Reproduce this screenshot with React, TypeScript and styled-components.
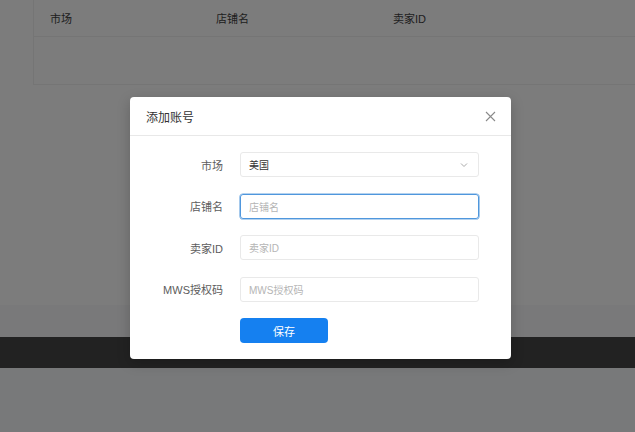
import React from "react";
import styled, { createGlobalStyle } from "styled-components";

const Global = createGlobalStyle`
  html, body { margin: 0; padding: 0; overflow: hidden; }
  body { font-family: "Liberation Sans", "Noto Sans CJK SC", sans-serif; }
  * { box-sizing: border-box; }
`;

const Page = styled.div`
  position: relative;
  width: 635px;
  height: 432px;
  overflow: hidden;
  display: flex;
  flex-direction: column;
  background: #f8f8f8;
`;

const Content = styled.div`
  height: 305px;
  padding-left: 33px;
`;

const Table = styled.div`
  width: 700px;
  border-left: 1px solid #eaeaea;
  border-bottom: 1px solid #eaeaea;
`;

const TableRow = styled.div<{ $head?: boolean }>`
  display: grid;
  grid-template-columns: 166px 177px 1fr;
  align-items: center;
  height: ${(p) => (p.$head ? "37px" : "47px")};
  padding-left: 16px;
  border-bottom: ${(p) => (p.$head ? "1px solid #eaeaea" : "none")};
  font-size: 11px;
  color: #3e3e3e;
`;

const Section = styled.div`
  height: 32px;
  background: #f2f3f5;
`;

const Footer = styled.div`
  height: 31px;
  background: #444;
`;

const Bottom = styled.div`
  flex: 1;
  background: #f0f2f4;
`;

const Mask = styled.div`
  position: absolute;
  inset: 0;
  background: rgba(0, 0, 0, 0.5);
`;

const Modal = styled.div`
  position: absolute;
  left: 130px;
  top: 97px;
  width: 381px;
  background: #fff;
  border-radius: 4px;
  box-shadow: 0 4px 14px rgba(0, 0, 0, 0.2);
`;

const Header = styled.div`
  height: 39px;
  display: flex;
  align-items: center;
  justify-content: space-between;
  padding: 0 15px 0 16px;
  border-bottom: 1px solid #e8e8e8;
`;

const Title = styled.div`
  font-size: 12px;
  color: #333;
`;

const Close = styled.button`
  border: none;
  background: none;
  padding: 0;
  width: 12px;
  height: 12px;
  display: flex;
  align-items: center;
  justify-content: center;
  color: #8a8a8a;
`;

const Body = styled.div`
  padding: 16px 32px 16px 0;
  display: grid;
  grid-template-columns: 93px 239px;
  column-gap: 17px;
  row-gap: 16.5px;
  align-items: center;
`;

const Label = styled.div`
  text-align: right;
  font-size: 11px;
  color: #5c5c5c;
`;

const Field = styled.div<{ $focus?: boolean; $placeholder?: boolean }>`
  height: 25px;
  border: 1px solid ${(p) => (p.$focus ? "#4f97dd" : "#e9e9e9")};
  box-shadow: ${(p) => (p.$focus ? "0 0 0 0.6px #6aa6e0" : "none")};
  border-radius: 3px;
  display: flex;
  align-items: center;
  justify-content: space-between;
  padding: 0 10px 0 8px;
  font-size: 10px;
  color: ${(p) => (p.$placeholder ? "#b5b5b5" : "#333")};
`;

const Chevron = styled.svg`
  width: 8px;
  height: 8px;
  color: #aaa;
`;

const Save = styled.button`
  grid-column: 2;
  width: 88px;
  height: 25px;
  border: none;
  border-radius: 4px;
  background: #1580f0;
  color: #fff;
  font-size: 11px;
  font-family: inherit;
  justify-self: start;
`;

export default function App() {
  return (
    <>
      <Global />
      <Page>
        <Content>
          <Table>
            <TableRow $head>
              <span>市场</span>
              <span>店铺名</span>
              <span>卖家ID</span>
            </TableRow>
            <TableRow />
          </Table>
        </Content>
        <Section />
        <Footer />
        <Bottom />
        <Mask />
        <Modal>
          <Header>
            <Title>添加账号</Title>
            <Close aria-label="close">
              <svg width="11" height="11" viewBox="0 0 11 11">
                <path d="M1 1L10 10M10 1L1 10" stroke="currentColor" strokeWidth="1.1" fill="none" />
              </svg>
            </Close>
          </Header>
          <Body>
            <Label>市场</Label>
            <Field>
              <span>美国</span>
              <Chevron viewBox="0 0 8 8">
                <path d="M1 2.5L4 5.5L7 2.5" stroke="currentColor" strokeWidth="1" fill="none" />
              </Chevron>
            </Field>
            <Label>店铺名</Label>
            <Field $focus $placeholder>
              <span>店铺名</span>
            </Field>
            <Label>卖家ID</Label>
            <Field $placeholder>
              <span>卖家ID</span>
            </Field>
            <Label>MWS授权码</Label>
            <Field $placeholder>
              <span>MWS授权码</span>
            </Field>
            <Save>保存</Save>
          </Body>
        </Modal>
      </Page>
    </>
  );
}
